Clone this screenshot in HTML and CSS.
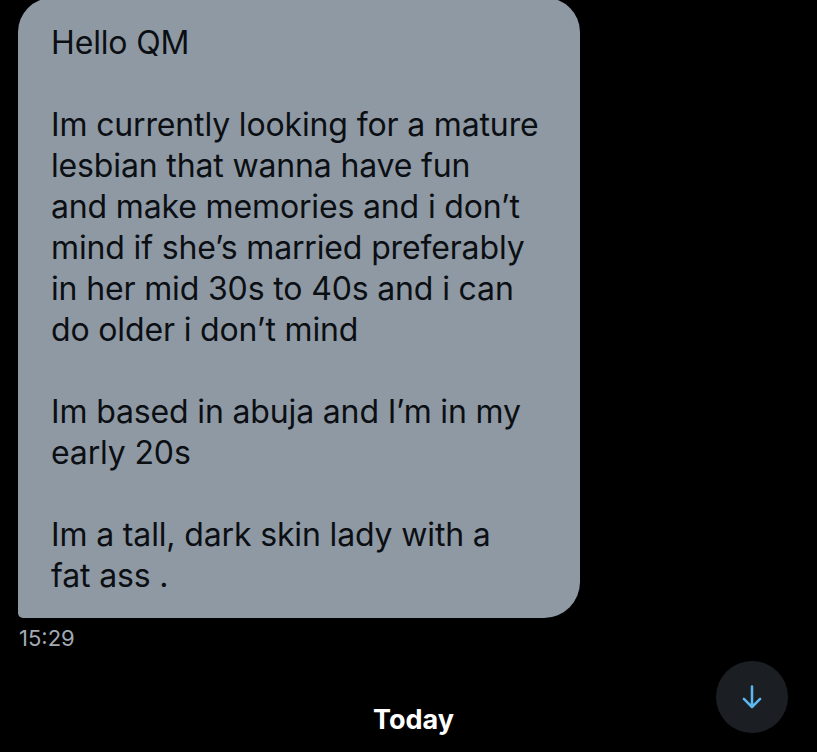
FILE: index.html
```html
<!DOCTYPE html>
<html lang="en">

<head>
    <meta charset="UTF-8">
    <meta name="viewport" content="width=device-width, initial-scale=1.0">
    <title>Messages</title>
    <link rel="stylesheet" href="styles.css">
</head>

<body>
    <div class="conversa">
        <div class="mensagem">
            <p>Hello QM</p>
            <p>Im currently looking for a mature<br>
                lesbian that wanna have fun<br>
                and make memories and i don’t<br>
                mind if she’s married preferably<br>
                in her mid 30s to 40s and i can<br>
                do older i don’t mind</p>
            <p>Im based in abuja and I’m in my<br>
                early 20s</p>
            <p>Im a tall, dark skin lady with a<br>
                fat ass .</p>
        </div>
        <div class="hora">15:29</div>

        <div class="rodape">
            <span class="dia">Today</span>
            <button class="descer" aria-label="Scroll down">
                <svg viewBox="0 0 24 24" width="30" height="30">
                    <path d="M12 3.5v16M5.5 13.5 12 20l6.5-6.5" fill="none" stroke="#5cb6f0" stroke-width="2" stroke-linecap="round" stroke-linejoin="round"/>
                </svg>
            </button>
        </div>
    </div>
</body>

</html>
```

FILE: styles.css
```css
body {
    margin: 0;
    background-color: #000000;
    font-family: Inter, "Noto Sans", sans-serif;
    color: #0b0f13;
    overflow: hidden;
}

.conversa {
    width: 817px;
    height: 752px;
}

.mensagem {
    margin: -2px 0 0 18px;
    width: 562px;
    box-sizing: border-box;
    padding: 24px 16px 22px 33px;
    background-color: #8f99a3;
    border-radius: 34px 34px 36px 5px;
    font-size: 32px;
    line-height: 41px;
    letter-spacing: -0.15px;
}

.mensagem p {
    margin: 0 0 41px 0;
    white-space: nowrap;
}

.mensagem p:last-child {
    margin-bottom: 0;
}

.hora {
    margin: 6px 0 0 19px;
    font-size: 22px;
    line-height: 28px;
    color: #a3aab1;
}

.rodape {
    position: relative;
    height: 101px;
    display: flex;
    justify-content: center;
    align-items: flex-end;
}

.dia {
    padding-left: 10px;
    margin-bottom: 17px;
    font-size: 27px;
    line-height: 33px;
    font-weight: bold;
    color: #ffffff;
}

.descer {
    position: absolute;
    right: 29px;
    top: 9px;
    width: 72px;
    height: 72px;
    border: none;
    border-radius: 50%;
    background-color: #1b1f23;
    display: flex;
    align-items: center;
    justify-content: center;
    padding: 0;
}
```
